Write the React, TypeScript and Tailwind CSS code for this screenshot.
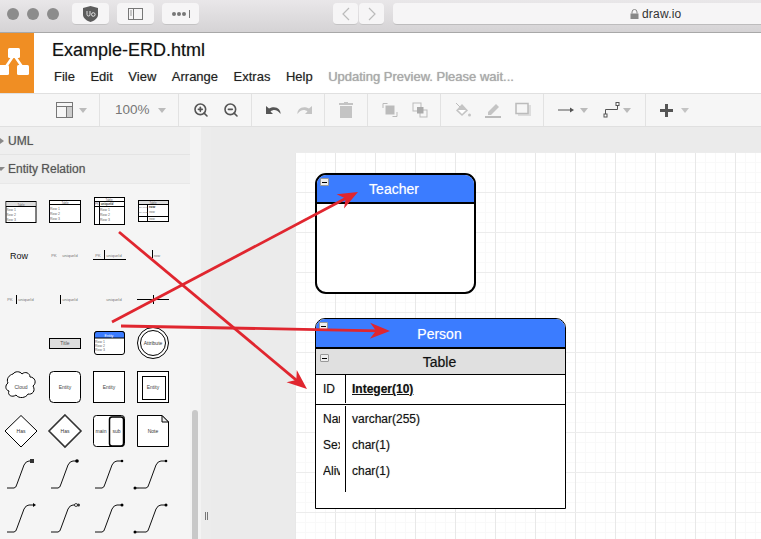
import { ReactNode } from 'react'
import { ZoomIn, ZoomOut } from 'lucide-react'

const blur = '[text-shadow:0_0_1px_rgba(0,0,0,0.35)]'

function Caret({ className = 'border-t-[#bbb]' }: { className?: string }) {
  return <span className={`inline-block w-0 h-0 border-x-[4px] border-x-transparent border-t-[5px] ${className}`} />
}

function ToolGroup({ width, children, last }: { width: string; children: ReactNode; last?: boolean }) {
  return (
    <div className={`${width} h-full flex items-center pl-[14px] shrink-0 ${last ? '' : 'border-r border-[#e2e2e2]'}`}>
      {children}
    </div>
  )
}

function Toolbar() {
  return (
    <div className="h-[34px] shrink-0 flex bg-[#f6f6f6] border-y border-[#e0e0e0]">
      <div className="w-[100px] h-full flex items-center pl-[56px] gap-[6px] border-r border-[#e2e2e2] shrink-0">
        <svg width="17" height="16" viewBox="0 0 17 16">
          <rect x="0.5" y="0.5" width="16" height="15" fill="none" stroke="#777" />
          <path d="M0.5 4.5H16.5M10.5 4.5V15.5" fill="none" stroke="#777" />
          <rect x="11" y="5" width="5" height="10" fill="#ccc" />
        </svg>
        <Caret />
      </div>
      <ToolGroup width="w-[79px]">
        <span className="text-[13.5px] leading-none text-[#777] ml-px mr-[9px] w-[34px]">100%</span>
        <Caret />
      </ToolGroup>
      <ToolGroup width="w-[73px]">
        <div className="flex gap-[14px] text-[#555]">
          <ZoomIn size={16} strokeWidth={2.4} />
          <ZoomOut size={16} strokeWidth={2.4} />
        </div>
      </ToolGroup>
      <ToolGroup width="w-[73px]">
        <div className="flex gap-[14px]">
          <svg width="16" height="10" viewBox="0 0 16 10">
            <path d="M0 1L0 9L7 9L4.5 6.5C7.5 4 11.500 4.500 14.500 9C15 4.500 10 0 3 3.500Z" fill="#555" />
          </svg>
          <svg width="16" height="10" viewBox="0 0 16 10">
            <path d="M16 1L16 9L9 9L11.500 6.500C8.500 4 4.500 4.500 1.500 9C1 4.500 6 0 13 3.500Z" fill="#c4c4c4" />
          </svg>
        </div>
      </ToolGroup>
      <ToolGroup width="w-[43px]">
        <svg width="14" height="16" viewBox="0 0 14 16">
          <path d="M0 1H5V0H9V1H14V3H0ZM1 4H13V16H1Z" fill="#c4c4c4" />
        </svg>
      </ToolGroup>
      <ToolGroup width="w-[73px]">
        <div className="flex gap-[14px]">
          <svg width="16" height="16" viewBox="0 0 16 16">
            <path d="M5.500 1.500H1V6M10.500 14.500H15V10" fill="none" stroke="#bbb" />
            <rect x="3.500" y="3.500" width="9" height="9" fill="#bbb" />
          </svg>
          <svg width="16" height="16" viewBox="0 0 16 16">
            <rect x="1" y="1" width="8" height="8" fill="none" stroke="#bbb" />
            <rect x="8" y="8" width="7" height="7" fill="none" stroke="#bbb" />
            <rect x="5" y="5" width="6.500" height="6.500" fill="#aaa" />
          </svg>
        </div>
      </ToolGroup>
      <ToolGroup width="w-[103px]">
        <div className="flex gap-[14px]">
          <svg width="16" height="16" viewBox="0 0 16 16">
            <path d="M1 1L5 5" stroke="#bbb" />
            <path d="M7 2L13 8.500L7 14L1 8.500Z" fill="#c4c4c4" />
            <path d="M3 8L11 8L7 12Z" fill="#fff" />
            <circle cx="14.500" cy="13" r="1.500" fill="#c4c4c4" />
          </svg>
          <svg width="16" height="16" viewBox="0 0 16 16">
            <path d="M3 10L11 2L14 5L6 13H3Z" fill="#c4c4c4" />
            <rect x="0" y="14" width="16" height="2" fill="#bbb" />
          </svg>
          <svg width="16" height="16" viewBox="0 0 16 16">
            <rect x="3" y="3" width="13" height="11" fill="#ddd" />
            <rect x="1" y="1.500" width="12" height="10" fill="#f6f6f6" stroke="#bbb" strokeWidth="1.500" />
          </svg>
        </div>
      </ToolGroup>
      <ToolGroup width="w-[102px]">
        <svg width="16" height="8" viewBox="0 0 16 8" className="mr-[6px]">
          <path d="M0 4H13" stroke="#555" />
          <path d="M12 1.500L16 4L12 6.500Z" fill="#555" />
        </svg>
        <Caret />
        <svg width="17" height="16" viewBox="0 0 17 16" className="ml-[15px] mr-[3px]">
          <path d="M2.500 12.500V7.500H14.500V2.500" fill="none" stroke="#555" />
          <rect x="1" y="12" width="3" height="3" fill="#fff" stroke="#555" />
          <rect x="13" y="0.500" width="3" height="3" fill="#fff" stroke="#555" />
        </svg>
        <Caret />
      </ToolGroup>
      <ToolGroup width="flex-1" last>
        <svg width="13" height="13" viewBox="0 0 13 13" className="mr-[8px]">
          <path d="M5 0H8V5H13V8H8V13H5V8H0V5H5Z" fill="#555" />
        </svg>
        <Caret className="border-t-[#c4c4c4]" />
      </ToolGroup>
    </div>
  )
}

function ChromeButton({ width, children }: { width: string; children?: ReactNode }) {
  return (
    <div className={`${width} h-[22px] rounded-[4px] bg-[#f6f5f6] border-b border-[#c4c3c4] flex items-center justify-center`}>
      {children}
    </div>
  )
}

function BrowserBar() {
  return (
    <div className="h-[33px] shrink-0 flex items-start pt-[3px] pl-[7px] bg-gradient-to-b from-[#e9e7e9] to-[#d5d3d5] border-b border-[#a8a8a8]">
      <div className="flex gap-[8px] mt-[5px] mr-[13px]">
        <span className="w-[12px] h-[12px] rounded-full bg-[#8c8c8c]" />
        <span className="w-[12px] h-[12px] rounded-full bg-[#8c8c8c]" />
        <span className="w-[12px] h-[12px] rounded-full bg-[#8c8c8c]" />
      </div>
      <div className="flex gap-[8px]">
        <ChromeButton width="w-[37px]">
          <svg width="15" height="16" viewBox="0 0 15 16">
            <path d="M0 2L7.500 0L15 2V9C15 12 11 15 7.500 16C4 15 0 12 0 9Z" fill="#5c5c5c" />
            <path d="M4 5V8.500A1.500 1.500 0 0 0 7 8.500V5M8.500 8.500A1.800 1.800 0 1 0 12.100 8.500A1.800 1.800 0 1 0 8.500 8.500Z" fill="none" stroke="#eee" strokeWidth="0.900" />
          </svg>
        </ChromeButton>
        <ChromeButton width="w-[37px]">
          <svg width="15" height="12" viewBox="0 0 15 12">
            <rect x="0.500" y="0.500" width="14" height="11" fill="none" stroke="#777" />
            <path d="M5.500 0.500V11.500" stroke="#777" />
            <path d="M2 3H4M2 5H4M2 7H4" stroke="#999" />
          </svg>
        </ChromeButton>
        <ChromeButton width="w-[37px]">
          <svg width="20" height="8" viewBox="0 0 20 8">
            <circle cx="3" cy="4" r="2" fill="#777" />
            <circle cx="8" cy="4" r="2" fill="#777" />
            <circle cx="13" cy="4" r="2" fill="#777" />
            <path d="M18.500 0V8" stroke="#777" />
          </svg>
        </ChromeButton>
      </div>
      <div className="flex gap-px ml-[134px]">
        <ChromeButton width="w-[25px]">
          <svg width="8" height="14" viewBox="0 0 8 14"><path d="M7 1L1 7L7 13" fill="none" stroke="#bbb" strokeWidth="1.200" /></svg>
        </ChromeButton>
        <ChromeButton width="w-[25px]">
          <svg width="8" height="14" viewBox="0 0 8 14"><path d="M1 1L7 7L1 13" fill="none" stroke="#bbb" strokeWidth="1.200" /></svg>
        </ChromeButton>
      </div>
      <div className="ml-[9px] flex-1 h-[22px] rounded-l-[4px] bg-[#f6f5f6] border-b border-[#bdbcbd] flex items-center pl-[237px] gap-[3px]">
        <svg width="9" height="10" viewBox="0 0 9 10">
          <path d="M2 4.500V3A2.500 2.500 0 0 1 7 3V4.500" fill="none" stroke="#888" />
          <rect x="0.500" y="4.500" width="8" height="5.500" fill="#888" />
        </svg>
        <span className="text-[12px] text-[#333] tracking-[0.2px]">draw.io</span>
      </div>
    </div>
  )
}

function Header() {
  const items = ['File', 'Edit', 'View', 'Arrange', 'Extras', 'Help']
  return (
    <div className="h-[60px] shrink-0 flex bg-white">
      <div className="w-[34px] bg-[#f08e23] shrink-0">
        <svg width="34" height="60" viewBox="0 0 34 60">
          <path d="M14 22L5 35M14 22L23 35" stroke="#fff" strokeWidth="2.500" />
          <rect x="8" y="15" width="12" height="10" rx="1.500" fill="#fff" />
          <rect x="-3" y="32" width="12" height="10" rx="1.500" fill="#fff" />
          <rect x="17" y="32" width="12" height="10" rx="1.500" fill="#fff" />
        </svg>
      </div>
      <div className="pl-[18px]">
        <div className={`text-[18px] leading-[21px] mt-[7px] text-[#111] ${blur}`}>Example-ERD.html</div>
        <div className={`flex items-center gap-[15.5px] mt-[8px] ml-[2px] text-[13px] leading-[15px] text-[#222] ${blur}`}>
          {items.map((item) => (
            <span key={item}>{item}</span>
          ))}
          <span className="text-[#aaa]">Updating Preview. Please wait...</span>
        </div>
      </div>
    </div>
  )
}

function Txt({ x, y, s = 3.500, c = '#666', children, b }: { x: number; y: number; s?: number; c?: string; children: ReactNode; b?: boolean }) {
  return (
    <text x={x} y={y} fontSize={s} fill={c} textAnchor="middle" fontWeight={b ? 700 : 400} fontFamily="'Liberation Sans', sans-serif">
      {children}
    </text>
  )
}

const S = { fill: '#fff', stroke: '#000' }

function Minus() {
  return <span className="w-[9px] h-[8px] bg-[#eee] border border-[#999] rounded-[1px] flex items-center justify-center"><span className="w-[5px] h-px bg-black" /></span>
}

const curveEnds: ReactNode[] = [
  <rect x="30" y="6" width="4" height="4" fill="#333" />,
  <circle cx="33" cy="8" r="1.800" fill="#000" />,
  <circle cx="34" cy="8" r="1.300" fill="#000" />,
  <><circle cx="34" cy="8" r="1.300" fill="#000" /><path d="M7 35H3" stroke="#000" /><circle cx="3" cy="35" r="1.500" fill="#000" /></>,
  <path d="M33 6L36 8L33 10Z" fill="#000" />,
  <><circle cx="32" cy="8" r="1.500" fill="#fff" stroke="#000" strokeWidth="0.700" /><circle cx="34.500" cy="8" r="1.500" fill="#333" /></>,
  <circle cx="34" cy="8" r="1.500" fill="#000" />,
  <><circle cx="34" cy="8" r="1.500" fill="#000" /><path d="M7 35H3" stroke="#000" /><circle cx="3" cy="35" r="1.500" fill="#000" /></>,
]

const shapes: ReactNode[] = [
  <>
    <rect x="6" y="12.500" width="30" height="21" {...S} />
    <rect x="6.500" y="13" width="29" height="4.500" fill="#ddd" />
    <path d="M6 17.500H36" stroke="#000" />
    <Txt x={21} y={16.500} s={3}>Table</Txt>
    <Txt x={11} y={22}>Row 1</Txt><Txt x={11} y={27}>Row 2</Txt><Txt x={11} y={32}>Row 3</Txt>
  </>,
  <>
    <rect x="5.500" y="11.500" width="31" height="22" {...S} />
    <path d="M5.500 15.500H36.500" stroke="#000" />
    <Txt x={21} y={14.700} s={3}>Table</Txt>
    <Txt x={11} y={21}>Row 1</Txt><Txt x={11} y={26}>Row 2</Txt><Txt x={11} y={31}>Row 3</Txt>
  </>,
  <>
    <rect x="6.500" y="8.500" width="30" height="27" {...S} />
    <path d="M6.500 12.500H36.500M6.500 17.500H36.500M11.500 12.500V36" stroke="#000" />
    <Txt x={21} y={11.500} s={3}>Table</Txt>
    <Txt x={9} y={16} s={3}>PK</Txt><Txt x={19} y={16} s={3} b c="#333">uniqueId</Txt>
    <Txt x={17} y={22}>Row 1</Txt><Txt x={17} y={27}>Row 2</Txt><Txt x={17} y={32}>Row 3</Txt>
  </>,
  <>
    <rect x="6.500" y="11.500" width="30" height="21" {...S} />
    <path d="M6.500 15.500H36.500M6.500 27.500H36.500M15.500 15.500V32.500" stroke="#000" />
    <rect x="7" y="12" width="29" height="3" fill="#ddd" />
    <Txt x={21} y={14.800} s={3}>Table</Txt>
    <Txt x={11} y={19} s={2.500}>PK,FK1</Txt><Txt x={11} y={24} s={2.500}>PK,FK2</Txt>
    <Txt x={20} y={19} b c="#333">row</Txt><Txt x={20} y={24}>row</Txt><Txt x={20} y={31}>row</Txt>
  </>,

  <Txt x={19} y={25.500} s={9} c="#111">Row</Txt>,
  <><Txt x={10} y={23.500} s={4} c="#777">PK</Txt><Txt x={26} y={23.500} s={4} c="#777">uniqueId</Txt></>,
  <><Txt x={10} y={23.500} s={4} c="#777">PK</Txt><path d="M16.500 17V26M5 26.500H38" stroke="#000" /><Txt x={26} y={23.500} s={4} c="#777">uniqueId</Txt></>,
  <><path d="M20.500 17V25" stroke="#000" /><Txt x={25} y={23.500} s={4} c="#777">row</Txt></>,

  <><Txt x={10} y={23.500} s={4} c="#777">PK</Txt><path d="M16.500 18V27" stroke="#000" /><Txt x={26} y={23.500} s={4} c="#777">uniqueId</Txt></>,
  <><path d="M16.500 18V27" stroke="#000" /><Txt x={26} y={23.500} s={4} c="#777">uniqueId</Txt></>,
  <Txt x={26} y={23.500} s={4} c="#777">uniqueId</Txt>,
  <path d="M5 22.500H37M21.500 18V27" stroke="#000" />,

  null,
  <><rect x="5.500" y="17.500" width="31" height="10" fill="#ddd" stroke="#000" /><Txt x={21} y={24} s={5} c="#555">Title</Txt></>,
  <>
    <rect x="6.500" y="10.500" width="30" height="23" rx="2.500" {...S} />
    <path d="M6.500 17V13A2.500 2.500 0 0 1 9 10.500H34A2.500 2.500 0 0 1 36.500 13V17Z" fill="#3b7cff" stroke="#000" />
    <Txt x={21} y={15.500} s={3.500} c="#fff">Entity</Txt>
    <Txt x={12} y={22}>Row 1</Txt><Txt x={12} y={26}>Row 2</Txt><Txt x={12} y={30}>Row 3</Txt>
  </>,
  <>
    <circle cx="21" cy="22" r="15.500" {...S} />
    <circle cx="21" cy="22" r="12.500" {...S} />
    <Txt x={21} y={23.500} s={5} c="#333">Attribute</Txt>
  </>,

  <>
    <path d="M13 9C15 6 20 6 22 9C25 6 30 8 30 12C35 12 37 18 33 21C36 26 32 30 28 29C26 33 19 34 16 30C12 33 7 30 9 26C5 25 5 20 8 18C6 14 9 10 13 9Z" {...S} />
    <Txt x={21} y={24} s={5} c="#444">Cloud</Txt>
  </>,
  <><rect x="5.500" y="6.500" width="31" height="31" rx="4" {...S} /><Txt x={21} y={24} s={5} c="#444">Entity</Txt></>,
  <><rect x="5.500" y="6.500" width="31" height="31" {...S} /><Txt x={21} y={24} s={5} c="#444">Entity</Txt></>,
  <><rect x="5.500" y="6.500" width="31" height="31" {...S} /><rect x="10.500" y="11.500" width="23" height="23" {...S} /><Txt x={21} y={24} s={5} c="#444">Entity</Txt></>,

  <><path d="M21 6.500L37 22L21 38L5 22Z" {...S} /><Txt x={21} y={24} s={5} c="#333">Has</Txt></>,
  <><path d="M21 6L37 22L21 38L5 22Z" fill="#fff" stroke="#333" strokeWidth="1.600" /><Txt x={21} y={24} s={5} c="#333">Has</Txt></>,
  <>
    <rect x="5.500" y="6.500" width="31" height="31" rx="3" {...S} />
    <rect x="21.500" y="8" width="14" height="29" rx="2.500" fill="#fff" stroke="#000" strokeWidth="1.500" />
    <Txt x={13} y={24} s={5} c="#333">main</Txt><Txt x={28.500} y={24} s={5} c="#333">sub</Txt>
  </>,
  <>
    <path d="M5.500 6.500H30L36.500 13V37.500H5.500Z" {...S} />
    <path d="M30 6.500V13H36.500Z" fill="#eee" stroke="#000" />
    <Txt x={21} y={24} s={5} c="#333">Note</Txt>
  </>,
]

function Shapes() {
  const cells = [...shapes, ...curveEnds.map((end) => (
    <>
      <path d="M7 35H14Q16 35 17 31L24 12Q26 8 29 8H34" fill="none" stroke="#111" strokeWidth="1" />
      {end}
    </>
  ))]
  return (
    <div className="grid grid-cols-[repeat(4,44px)] auto-rows-[44px] pt-[5px]">
      {cells.map((cell, i) => (
        <svg key={i} width="44" height="44" viewBox="0 0 44 44">{cell}</svg>
      ))}
    </div>
  )
}

function Sidebar() {
  return (
    <div className="w-[190px] shrink-0 bg-[#f5f5f5] overflow-hidden">
      <div className={`h-[28px] flex items-center gap-[4px] bg-[#efefef] border-b border-[#e4e4e4] text-[12px] text-[#555] ${blur}`}>
        <span className="w-0 h-0 border-y-[3px] border-y-transparent border-l-[4px] border-l-[#888]" />
        UML
      </div>
      <div className={`h-[29px] flex items-center bg-[#efefef] border-b border-[#e8e8e8] text-[12px] text-[#555] ${blur}`}>
        <span className="w-0 h-0 border-x-[4px] border-x-transparent border-t-[4px] border-t-[#888] ml-[-3px] mr-[3px]" />
        Entity Relation
      </div>
      <Shapes />
    </div>
  )
}

function Arrow({ x1, y1, x2, y2 }: { x1: number; y1: number; x2: number; y2: number }) {
  const len = Math.hypot(x2 - x1, y2 - y1)
  const ux = (x2 - x1) / len
  const uy = (y2 - y1) / len
  const pt = (back: number, side: number) => `${x2 - ux * back - uy * side},${y2 - uy * back + ux * side}`
  return (
    <>
      <line x1={x1} y1={y1} x2={x2 - ux * 12} y2={y2 - uy * 12} stroke="#e0262f" strokeWidth="2.800" />
      <polygon points={`${pt(0, 0)} ${pt(20, 8)} ${pt(14, 0)} ${pt(20, -8)}`} fill="#e0262f" />
    </>
  )
}

function Canvas() {
  return (
    <div className="flex-1 bg-[#ebebeb] pl-[84px] pt-[25px] flex overflow-hidden">
      <div className="relative flex-1 bg-white bg-[linear-gradient(#ececec_1px,transparent_1px),linear-gradient(90deg,#e8e8e8_1px,transparent_1px),linear-gradient(#f9f9f9_1px,transparent_1px),linear-gradient(90deg,#f9f9f9_1px,transparent_1px)] bg-[size:40px_40px,40px_40px,10px_10px,10px_10px]">
        <div className="absolute left-[20px] top-[21px] w-[161px] h-[121px] rounded-[11px] border-2 border-black overflow-hidden bg-white">
          <div className="relative h-[29px] bg-[#3b7cff] border-b-2 border-black flex items-center justify-center pt-px pr-[3px] text-[14px] text-white [text-shadow:0_0_1px_rgba(255,255,255,0.5)]">
            Teacher
            <div className="absolute left-[3px] top-[3px]"><Minus /></div>
          </div>
        </div>
        <div className="absolute left-[20px] top-[166px] w-[251px] h-[191px] rounded-t-[10px] border border-black bg-white overflow-hidden">
          <div className="relative h-[30px] bg-[#3b7cff] border-b-2 border-black flex items-center justify-center text-[14px] text-white pt-[2px] pr-[2px] [text-shadow:0_0_1px_rgba(255,255,255,0.5)]">
            Person
            <div className="absolute left-[3px] top-[3px]"><Minus /></div>
          </div>
          <div className={`relative h-[26px] bg-[#e0e0e0] border-b border-black flex items-center justify-center pt-px pr-[2px] text-[14px] text-[#111] ${blur}`}>
            Table
            <div className="absolute left-[4px] top-[5px]"><Minus /></div>
          </div>
          <div className={`h-[30px] flex items-center border-b border-black pb-px text-[12px] text-[#111] ${blur}`}>
            <div className="w-[30px] h-full border-r border-black pl-[7px] flex items-center">ID</div>
            <div className="pl-[6px] font-bold underline">Integer(10)</div>
          </div>
          <div className="w-[30px] h-[86px] border-r border-black absolute left-0 top-[87px]" />
          {[
            ['Name', 'varchar(255)'],
            ['Sex', 'char(1)'],
            ['Alive', 'char(1)'],
          ].map(([name, type], i) => (
            <div key={name} className={`h-[26px] flex items-center text-[12px] text-[#111] ${i === 0 ? 'mt-px' : ''} ${blur}`}>
              <div className="w-[17px] ml-[7px] mr-[6px] overflow-hidden whitespace-nowrap">{name}</div>
              <div className="pl-[6px]">{type}</div>
            </div>
          ))}
        </div>
      </div>
    </div>
  )
}

export default function App() {
  return (
    <div className="relative w-[761px] h-[539px] overflow-hidden flex flex-col bg-white font-['Liberation_Sans',Arial,sans-serif]">
      <BrowserBar />
      <Header />
      <Toolbar />
      <div className="flex-1 flex min-h-0">
        <Sidebar />
        <div className="w-[11px] shrink-0 bg-[#f3f3f3] flex flex-col justify-end items-center pr-[2px]">
          <div className="w-[6px] h-[129px] bg-[#c8c8c8] rounded-t-[3px]" />
        </div>
        <div className="w-[10px] shrink-0 bg-[#ececec] flex items-end justify-center gap-px pb-[19px]">
          <span className="w-px h-[8px] bg-[#777]" />
          <span className="w-px h-[8px] bg-[#777]" />
        </div>
        <Canvas />
      </div>
      <svg className="absolute inset-0 pointer-events-none" width="761" height="539" viewBox="0 0 761 539">
        <Arrow x1={119} y1={232} x2={307} y2={389} />
        <Arrow x1={112} y1={322} x2={358} y2={192} />
        <Arrow x1={121} y1={326} x2={390} y2={331} />
      </svg>
    </div>
  )
}
